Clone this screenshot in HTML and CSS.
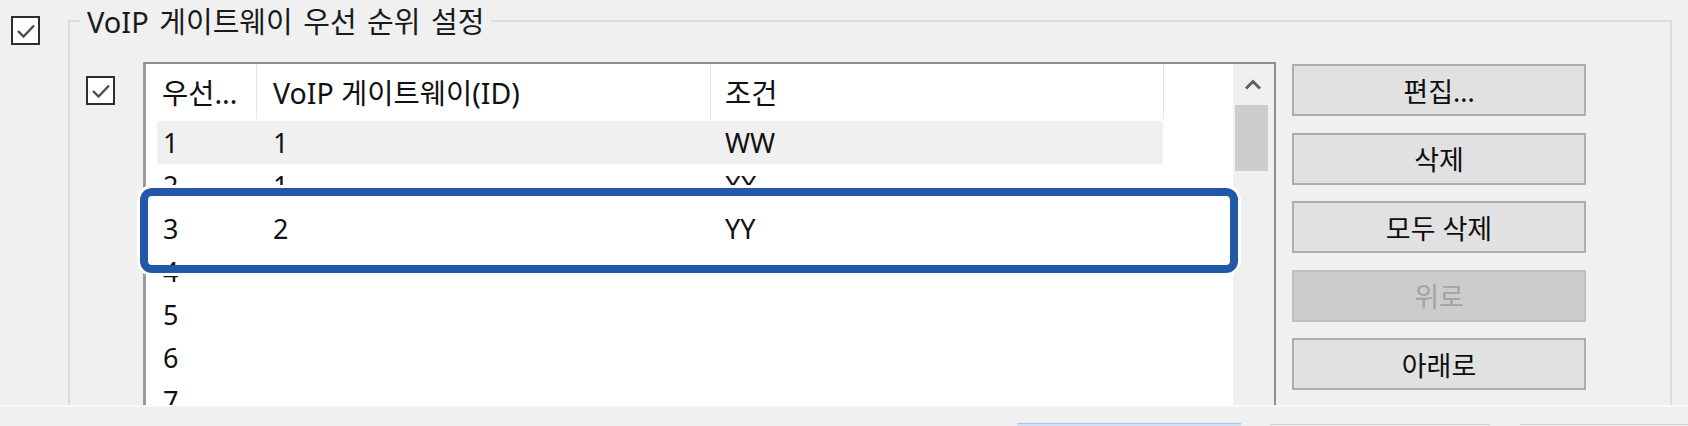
FILE: index.html
```html
<!DOCTYPE html>
<html lang="ko">
<head>
<meta charset="utf-8">
<title>VoIP 게이트웨이 우선 순위 설정</title>
<link rel="stylesheet" href="styles.css">
</head>
<body>
<div class="main">
  <span class="cb"><svg viewBox="0 0 25 25" width="25" height="25"><path d="M5 13 L10.5 18.5 L21 7.5" fill="none" stroke="#4d4d4d" stroke-width="2.4"/></svg></span>
  <div class="group">
    <div class="group-title">VoIP 게이트웨이 우선 순위 설정</div>
    <div class="group-body">
      <span class="cb cb-inner"><svg viewBox="0 0 25 25" width="25" height="25"><path d="M5 13 L10.5 18.5 L21 7.5" fill="none" stroke="#4d4d4d" stroke-width="2.4"/></svg></span>
      <div class="list">
        <div class="list-content">
          <div class="list-head">
            <div class="th th1">우선...</div>
            <div class="th th2">VoIP 게이트웨이(ID)</div>
            <div class="th th3">조건</div>
            <div class="th th-fill"></div>
          </div>
          <div class="rows">
            <div class="row alt"><span>1</span><span>1</span><span>WW</span></div>
            <div class="row"><span>2</span><span>1</span><span>XX</span></div>
            <div class="row"><span>3</span><span>2</span><span>YY</span></div>
            <div class="row"><span>4</span><span></span><span></span></div>
            <div class="row"><span>5</span><span></span><span></span></div>
            <div class="row"><span>6</span><span></span><span></span></div>
            <div class="row"><span>7</span><span></span><span></span></div>
          </div>
        </div>
        <div class="scrollbar">
          <div class="sb-arrow"><svg viewBox="0 0 18 11" width="18" height="11"><path d="M2 9.5 L9 2.5 L16 9.5" fill="none" stroke="#606060" stroke-width="3"/></svg></div>
          <div class="sb-thumb"></div>
        </div>
      </div>
      <div class="buttons">
        <div class="btn">편집...</div>
        <div class="btn">삭제</div>
        <div class="btn">모두 삭제</div>
        <div class="btn disabled">위로</div>
        <div class="btn">아래로</div>
      </div>
    </div>
  </div>
  <div class="highlight"></div>
</div>
<div class="footer">
  <span class="fb fb-blue"></span>
  <span class="fb fb-gray1"></span>
  <span class="fb fb-gray2"></span>
</div>
</body>
</html>
```
FILE: styles.css
```css
* { box-sizing: border-box; }
html, body { margin: 0; padding: 0; }
body {
  width: 1688px;
  height: 426px;
  overflow: hidden;
  background: #f0f0f0;
  font-family: "Noto Sans", "Noto Sans CJK KR", sans-serif;
  font-size: 27px;
  color: #111;
  display: flex;
  flex-direction: column;
}
.main {
  position: relative;
  height: 405px;
  overflow: hidden;
  display: flex;
  align-items: flex-start;
  padding: 16px 0 0 11px;
  flex: none;
}
.cb {
  flex: none;
  width: 29px;
  height: 29px;
  border: 2px solid #2e2e2e;
  background: #fff;
  display: flex;
  align-items: center;
  justify-content: center;
}
.cb svg { display: block; }
.group {
  position: relative;
  flex: none;
  margin-left: 28px;
  margin-top: 4px;
  width: 1604px;
  height: 500px;
  border: 2px solid #dcdcdc;
}
.group-title {
  position: absolute;
  left: 10px;
  top: -17px;
  padding: 0 7px;
  background: #f0f0f0;
  font-size: 29px;
  word-spacing: 3px;
  line-height: 34px;
  white-space: nowrap;
  color: #1a1a1a;
}
.group-body {
  display: flex;
  align-items: flex-start;
  padding: 40px 0 0 16px;
}
.cb-inner { margin-top: 14px; }
.list {
  flex: none;
  margin-left: 28px;
  width: 1133px;
  height: 420px;
  border: 2px solid #8e8e8e;
  border-left: 3px solid #9a9a9a;
  border-bottom: none;
  background: #fff;
  display: flex;
}
.list-content { width: 1087px; flex: none; }
.list-head {
  display: flex;
  height: 55px;
  margin-bottom: 2px;
  background: #fff;
  font-size: 28.5px;
}
.th {
  height: 55px;
  display: flex;
  align-items: center;
  white-space: nowrap;
  overflow: hidden;
  border-right: 1px solid #e6e6e6;
}
.th1 { width: 111px; padding-left: 16px; }
.th2 { width: 454px; padding-left: 16px; }
.th3 { width: 453px; padding-left: 14px; }
.th-fill { flex: 1; border-right: none; }
.rows { margin-left: 11px; width: 1006px; }
.row {
  display: grid;
  grid-template-columns: 110px 452px 1fr;
  padding-left: 6px;
  height: 43px;
  align-items: center;
  line-height: 43px;
}
.row.alt { background: #f0f0f0; }
.scrollbar {
  flex: none;
  width: 41px;
  background: #f0f0f0;
  display: flex;
  flex-direction: column;
}
.sb-arrow {
  height: 41px;
  display: flex;
  align-items: center;
  justify-content: center;
  padding-right: 2px;
}
.sb-arrow svg { display: block; }
.sb-thumb {
  margin: 0 6px 0 2px;
  height: 66px;
  background: #cdcdcd;
}
.buttons {
  flex: none;
  margin-left: 16px;
  margin-top: 2px;
  width: 294px;
  display: flex;
  flex-direction: column;
  gap: 16.5px;
}
.btn {
  height: 52px;
  border: 2px solid #adadad;
  background: #e1e1e1;
  display: flex;
  align-items: center;
  justify-content: center;
  color: #0d0d0d;
  white-space: nowrap;
}
.btn.disabled {
  background: #cccccc;
  border-color: #c0c0c0;
  color: #a3a3a3;
}
.highlight {
  position: absolute;
  left: 140px;
  top: 188px;
  width: 1098px;
  height: 85px;
  border: 8px solid #2357a8;
  border-radius: 12px;
  box-shadow: 0 0 0 3px #fff;
}
.footer {
  flex: none;
  height: 21px;
  border-top: 2px solid #fbfbfb;
  background: #f0f0f0;
  display: flex;
  align-items: flex-start;
  padding-top: 16px;
}
.fb { display: block; height: 4px; }
.fb-blue { margin-left: 1017px; width: 224px; background: #cde2f5; border-top: 1px solid #a9c9e8; }
.fb-gray1 { margin-left: 29px; width: 220px; margin-top: 1px; border-top: 1px solid #cfcfcf; }
.fb-gray2 { margin-left: 30px; width: 168px; margin-top: 1px; border-top: 1px solid #cfcfcf; }
```
